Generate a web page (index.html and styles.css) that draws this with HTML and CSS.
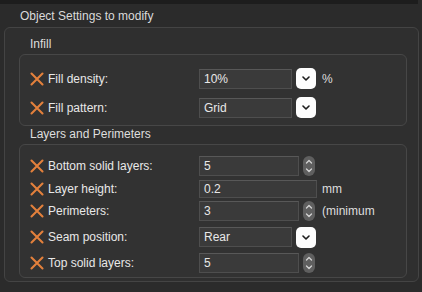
FILE: index.html
```html
<!DOCTYPE html>
<html lang="en">
<head>
  <meta charset="UTF-8" />
  <title>Object Settings</title>
  <link rel="stylesheet" href="styles.css">
</head>
<body>
  <div class="topbar"></div>
  <div class="title">Object Settings to modify</div>

  <div class="group">
    <div class="caption">Infill</div>
    <div class="box box-infill">
      <div class="row row-combo">
        <svg class="x-icon" viewBox="0 0 14 14"><path d="M1.5 1.5 L12.5 12.5 M12.5 1.5 L1.5 12.5"/></svg>
        <span class="label">Fill density:</span>
        <div class="controls">
          <div class="field field-combo">10%</div>
          <div class="drop-btn"><svg viewBox="0 0 8 5"><path d="M1 1 L4 4 L7 1"/></svg></div>
        </div>
        <span class="unit">%</span>
      </div>
      <div class="row row-combo">
        <svg class="x-icon" viewBox="0 0 14 14"><path d="M1.5 1.5 L12.5 12.5 M12.5 1.5 L1.5 12.5"/></svg>
        <span class="label">Fill pattern:</span>
        <div class="controls">
          <div class="field field-combo">Grid</div>
          <div class="drop-btn"><svg viewBox="0 0 8 5"><path d="M1 1 L4 4 L7 1"/></svg></div>
        </div>
      </div>
    </div>

    <div class="caption caption-second">Layers and Perimeters</div>
    <div class="box box-layers">
      <div class="row">
        <svg class="x-icon" viewBox="0 0 14 14"><path d="M1.5 1.5 L12.5 12.5 M12.5 1.5 L1.5 12.5"/></svg>
        <span class="label">Bottom solid layers:</span>
        <div class="controls">
          <div class="field field-spin">5</div>
          <div class="spinner"><svg viewBox="0 0 12 20"><path d="M3.5 7 L6 4.5 L8.5 7 M3.5 13 L6 15.5 L8.5 13"/></svg></div>
        </div>
      </div>
      <div class="row row-short">
        <svg class="x-icon" viewBox="0 0 14 14"><path d="M1.5 1.5 L12.5 12.5 M12.5 1.5 L1.5 12.5"/></svg>
        <span class="label">Layer height:</span>
        <div class="controls">
          <div class="field field-text">0.2</div>
        </div>
        <span class="unit">mm</span>
      </div>
      <div class="row">
        <svg class="x-icon" viewBox="0 0 14 14"><path d="M1.5 1.5 L12.5 12.5 M12.5 1.5 L1.5 12.5"/></svg>
        <span class="label">Perimeters:</span>
        <div class="controls">
          <div class="field field-spin">3</div>
          <div class="spinner"><svg viewBox="0 0 12 20"><path d="M3.5 7 L6 4.5 L8.5 7 M3.5 13 L6 15.5 L8.5 13"/></svg></div>
        </div>
        <span class="unit">(minimum</span>
      </div>
      <div class="row row-spaced">
        <svg class="x-icon" viewBox="0 0 14 14"><path d="M1.5 1.5 L12.5 12.5 M12.5 1.5 L1.5 12.5"/></svg>
        <span class="label">Seam position:</span>
        <div class="controls">
          <div class="field field-combo">Rear</div>
          <div class="drop-btn"><svg viewBox="0 0 8 5"><path d="M1 1 L4 4 L7 1"/></svg></div>
        </div>
      </div>
      <div class="row row-spaced">
        <svg class="x-icon" viewBox="0 0 14 14"><path d="M1.5 1.5 L12.5 12.5 M12.5 1.5 L1.5 12.5"/></svg>
        <span class="label">Top solid layers:</span>
        <div class="controls">
          <div class="field field-spin">5</div>
          <div class="spinner"><svg viewBox="0 0 12 20"><path d="M3.5 7 L6 4.5 L8.5 7 M3.5 13 L6 15.5 L8.5 13"/></svg></div>
        </div>
      </div>
    </div>
  </div>
</body>
</html>
```

FILE: styles.css
```css
* {
  margin: 0;
  padding: 0;
  box-sizing: border-box;
}

html, body {
  width: 100%;
  height: 100%;
  background-color: #2b2b2b;
  font-family: 'Liberation Sans', Arial, sans-serif;
  font-size: 12px;
  color: #e2e2e2;
  overflow: hidden;
}

.topbar {
  height: 4px;
  background-color: #1d1d1d;
  margin-right: 4px;
}

.title {
  height: 23px;
  line-height: 24px;
  padding-left: 20px;
  color: #dadada;
}

.group {
  margin: 0 3px 0 4px;
  background-color: #2f2f2f;
  border: 1px solid #444;
  border-radius: 6px;
  padding: 0 11px 3px 14px;
}

.caption {
  height: 26px;
  padding: 9px 0 3px 11px;
  line-height: 14px;
  color: #dedede;
}

.caption-second {
  height: 18px;
  padding-top: 1px;
}

.box {
  background-color: #323232;
  border: 1px solid #474747;
  border-radius: 6px;
  padding-left: 10px;
  display: flex;
  flex-direction: column;
}

.box-infill {
  height: 72px;
  padding-top: 13px;
  gap: 8px;
}

.box-layers {
  height: 134px;
  padding-top: 11px;
  gap: 3px;
}

.row {
  display: flex;
  align-items: center;
  height: 20px;
}

.row-combo {
  height: 21px;
}

.row-short {
  height: 19px;
}

.row-spaced {
  margin-top: 3px;
}

.x-icon {
  width: 14px;
  height: 14px;
  margin-right: 4px;
  fill: none;
  stroke: #e3803c;
  stroke-width: 2.1;
  stroke-linecap: round;
}

.label {
  width: 151px;
  color: #e8e8e8;
}

.controls {
  display: flex;
  align-items: center;
  gap: 4px;
  width: 119px;
}

.field {
  height: 20px;
  line-height: 18px;
  padding-left: 4px;
  background-color: #3a3a3a;
  border: 1px solid #4e4e4e;
  border-top-color: #585858;
  color: #e8e8e8;
}

.field-combo {
  width: 93px;
  height: 20px;
}

.field-spin {
  width: 100px;
}

.field-text {
  width: 118px;
  height: 18px;
  line-height: 16px;
}

.drop-btn {
  width: 20px;
  height: 21px;
  background-color: #fdfdfd;
  border-radius: 5px;
  display: flex;
  align-items: center;
  justify-content: center;
}

.drop-btn svg {
  width: 8px;
  height: 5px;
  fill: none;
  stroke: #1c1c1c;
  stroke-width: 1.6;
  stroke-linecap: round;
  stroke-linejoin: round;
}

.spinner {
  width: 12px;
  height: 20px;
  background-color: #5f5f5f;
  border-radius: 6px;
}

.spinner svg {
  display: block;
  width: 12px;
  height: 20px;
  fill: none;
  stroke: #d4d4d4;
  stroke-width: 1.3;
  stroke-linecap: round;
  stroke-linejoin: round;
}

.unit {
  padding-left: 4px;
  color: #dedede;
  white-space: nowrap;
}
```
